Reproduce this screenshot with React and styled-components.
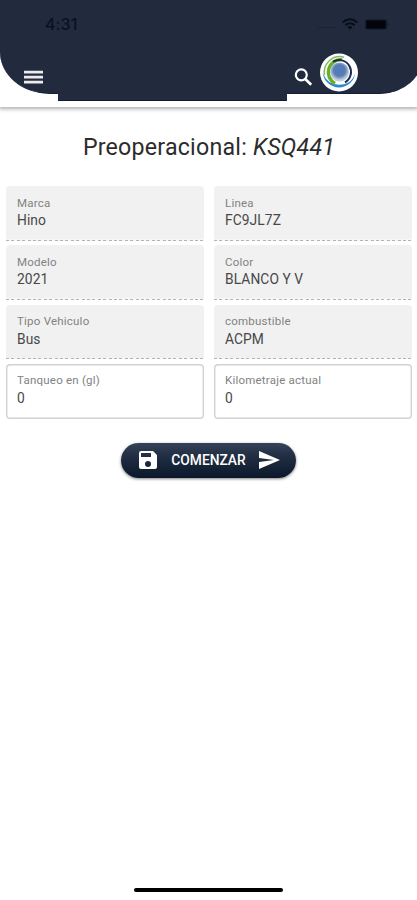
import React from "react";
import styled, { createGlobalStyle } from "styled-components";

const GlobalStyle = createGlobalStyle`
  * { box-sizing: border-box; }
  body { margin: 0; background: #fff; font-family: Roboto, sans-serif; }
`;

const Screen = styled.div`
  width: 417px;
  height: 900px;
  display: flex;
  flex-direction: column;
  overflow: hidden;
  background: #fff;
`;

const Header = styled.header`
  height: 107px;
  flex: none;
  background: #fff;
  box-shadow: 0 1px 4px 1px rgba(0, 0, 0, 0.32);
`;

const HeaderBar = styled.div`
  width: 423px;
  height: 94px;
  background: #212b3d;
  border-bottom: 1px solid #14203a;
  border-radius: 0 0 43px 50px / 0 0 38px 42px;
`;

const HeaderTab = styled.div`
  width: 229px;
  height: 9px;
  margin: -2px 0 0 58px;
  background: #212b3d;
  border-bottom: 1.5px solid #101a30;
`;

const StatusBar = styled.div`
  width: 417px;
  height: 48px;
  padding: 0 28px 0 45px;
  display: flex;
  align-items: center;
  justify-content: space-between;
`;

const Clock = styled.span`
  font: 500 16px/20px Inter, sans-serif;
  letter-spacing: 0.1px;
  color: #0a1120;
`;

const StatusIcons = styled.svg`
  display: block;
  flex: none;
`;

const Toolbar = styled.div`
  height: 45px;
  padding: 0 0 0 24px;
  display: flex;
  align-items: flex-start;
  svg { display: block; flex: none; }
`;

const MenuIcon = styled.svg`margin: 22px 251px 0 0;`;
const SearchIcon = styled.svg`margin: 20px 7px 0 0;`;
const Logo = styled.svg`margin-top: 5px;`;

const Title = styled.h1`
  margin: 25px 0 0 1px;
  height: 30px;
  font-size: 23.2px;
  line-height: 30px;
  font-weight: 400;
  letter-spacing: 0.22px;
  text-align: center;
  color: #2c2c2c;
  white-space: nowrap;
`;

const Fields = styled.div`
  margin: 24px 5px 0 6px;
  display: grid;
  grid-template-columns: 198px 198px;
  justify-content: space-between;
  grid-auto-rows: 55px;
  row-gap: 4.3px;
`;

const Field = styled.label`
  display: flex;
  flex-direction: column;
  padding: 9.6px 11px 0;
  border-radius: ${(p) => (p.$editable ? "4px" : "4px 4px 0 0")};
  box-shadow: ${(p) => (p.$editable ? "inset 0 0 0 1.4px #d2d2d2" : "none")};
  background: ${(p) =>
    p.$editable
      ? "#fff"
      : "repeating-linear-gradient(90deg, #b4b4b4 0 3px, #f6f6f6 3px 5.4px) 0 100% / 100% 1.4px no-repeat, linear-gradient(#f1f1f1, #f1f1f1) 0 0 / 100% 53.6px no-repeat"};
`;

const FieldLabel = styled.span`
  font-size: 11.5px;
  line-height: 15px;
  letter-spacing: 0.22px;
  color: #828282;
`;

const FieldValue = styled.span`
  margin-top: 0.5px;
  font-size: 13.8px;
  line-height: 18px;
  letter-spacing: 0.08px;
  color: #484848;
`;

const StartButton = styled.button`
  align-self: center;
  width: 175px;
  height: 35px;
  margin: 24px 0 0;
  padding: 0 15px;
  display: flex;
  align-items: center;
  justify-content: space-between;
  border: 0;
  border-radius: 18px;
  background: linear-gradient(#35435a 0, #243146 30%, #0b172a 100%);
  box-shadow: 0 1px 3px rgba(0, 0, 0, 0.5);
  color: #fff;
  font: 500 13.8px/20px Roboto, sans-serif;
  svg { display: block; flex: none; }
`;

const HomeIndicator = styled.div`
  width: 149px;
  height: 4px;
  margin: auto auto 8px;
  border-radius: 2px;
  background: #000;
`;

const fields = [
  { label: "Marca", value: "Hino" },
  { label: "Linea", value: "FC9JL7Z" },
  { label: "Modelo", value: "2021" },
  { label: "Color", value: "BLANCO Y V" },
  { label: "Tipo Vehiculo", value: "Bus" },
  { label: "combustible", value: "ACPM" },
  { label: "Tanqueo en (gl)", value: "0", editable: true },
  { label: "Kilometraje actual", value: "0", editable: true },
];

export default function App() {
  return (
    <>
      <GlobalStyle />
      <Screen>
        <Header>
          <HeaderBar>
            <StatusBar>
              <Clock>4:31</Clock>
              <StatusIcons width="72" height="16" viewBox="0 0 72 16">
                <path d="M1 11.5h19" stroke="#192237" strokeWidth="1" />
                <g fill="none" stroke="#080e1b" strokeWidth="2">
                  <path d="M25.6 6.4q7.4-6.2 14.8 0" />
                  <path d="M28.3 9.1q4.7-3.7 9.4 0" />
                </g>
                <path d="M30.5 11q2.5-1.8 5 0L33 13.8z" fill="#080e1b" />
                <rect x="48" y="3.5" width="22" height="10" rx="2" fill="#10182a" />
                <rect x="49.5" y="4.5" width="19" height="8" rx="1" fill="#02040a" />
                <path d="M70.7 6.5q1.6 2 0 4z" fill="#10182a" />
              </StatusIcons>
            </StatusBar>
            <Toolbar>
              <MenuIcon width="19" height="14" viewBox="0 0 19 14">
                <path d="M0 2.2h19M0 7.2h19M0 12.2h19" stroke="#eee9ed" strokeWidth="2.8" />
              </MenuIcon>
              <SearchIcon width="19" height="18" viewBox="0 0 19 18">
                <circle cx="7.3" cy="6.8" r="5.5" fill="none" stroke="#fff" strokeWidth="2.2" />
                <path d="M11 10.7l6.2 6" stroke="#fff" strokeWidth="2.7" />
              </SearchIcon>
              <Logo width="39" height="39" viewBox="0 0 39 39">
                <defs>
                  <radialGradient id="globe" cx=".5" cy=".42">
                    <stop offset="0" stopColor="#4f7dba" />
                    <stop offset=".6" stopColor="#587db3" />
                    <stop offset="1" stopColor="#c6d0df" />
                  </radialGradient>
                </defs>
                <circle cx="19" cy="19.5" r="19" fill="#fff" />
                <path d="M2.8 20A16.3 16.3 0 0 0 35.2 20Q32 31.5 19 31.7 7 31.5 2.8 20z" fill="#2e86d0" />
                <path d="M24 4.2A15.6 15.6 0 0 0 4.5 22" fill="none" stroke="#86b96a" strokeWidth="1.5" />
                <path d="M22 6.6A12.8 12.8 0 0 0 15 30.6" fill="none" stroke="#68b022" strokeWidth="3.4" />
                <path d="M13 8.6A12 12 0 1 1 25 29.4" fill="none" stroke="#1b2953" strokeWidth="2" />
                <circle cx="19.5" cy="19" r="9.6" fill="url(#globe)" />
              </Logo>
            </Toolbar>
          </HeaderBar>
          <HeaderTab />
        </Header>
        <Title>
          Preoperacional: <em>KSQ441</em>
        </Title>
        <Fields>
          {fields.map((f) => (
            <Field key={f.label} $editable={f.editable}>
              <FieldLabel>{f.label}</FieldLabel>
              <FieldValue>{f.value}</FieldValue>
            </Field>
          ))}
        </Fields>
        <StartButton>
          <svg width="24" height="24" viewBox="0 0 24 24" fill="#fff">
            <path d="M17 3H5a2 2 0 0 0-2 2v14a2 2 0 0 0 2 2h14c1.1 0 2-.9 2-2V7l-4-4zm-5 16a3 3 0 1 1 0-6 3 3 0 0 1 0 6zm3-10H5V5h10v4z" />
          </svg>
          <span>COMENZAR</span>
          <svg width="24" height="24" viewBox="0 0 24 24" fill="#fff">
            <path d="M2.01 21L23 12 2.01 3 2 10l15 2-15 2z" />
          </svg>
        </StartButton>
        <HomeIndicator />
      </Screen>
    </>
  );
}
